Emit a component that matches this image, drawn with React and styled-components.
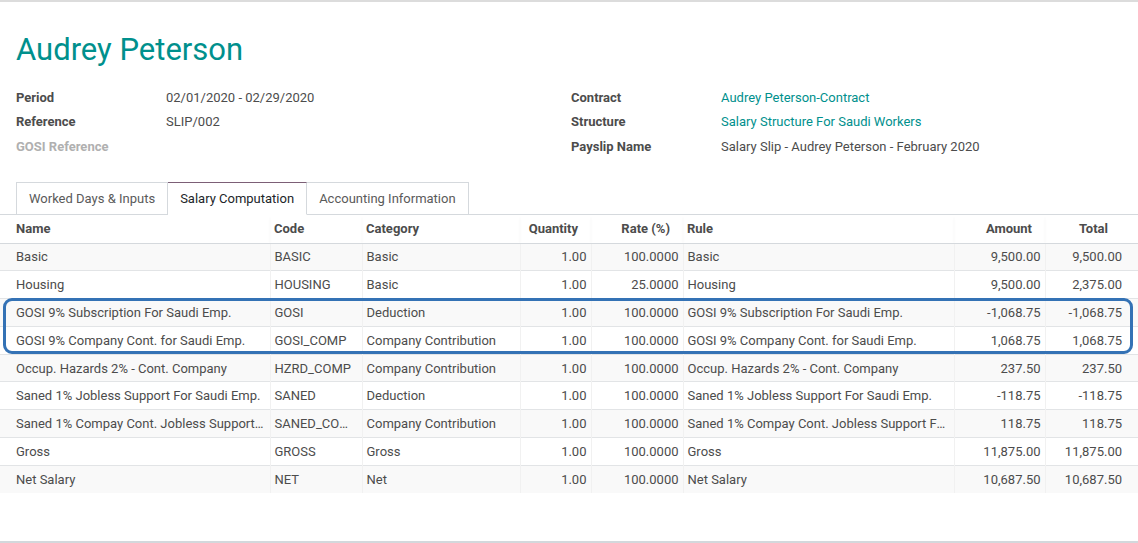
import React from 'react';
import styled, { createGlobalStyle } from 'styled-components';

const GlobalStyle = createGlobalStyle`
  html, body {
    margin: 0;
    padding: 0;
    background: #ffffff;
  }
  body {
    font-family: Roboto, 'Noto Sans', sans-serif;
    font-size: 13px;
    color: #4c4c4c;
  }
`;

const StyledPage = styled.div`
  width: 1138px;
  height: 543px;
  box-sizing: border-box;
  border-top: 2px solid #dcdcdc;
  border-bottom: 2px solid #d3d8dc;
  overflow: hidden;
`;

const StyledSheet = styled.div`
  padding: 29px 16px 0;
`;

const StyledTitle = styled.h1`
  margin: 0;
  font-size: 31px;
  font-weight: 400;
  line-height: 38px;
  color: #00908d;
`;

const StyledGroups = styled.div`
  display: grid;
  grid-template-columns: 555px 1fr;
  margin-top: 16px;
`;

const StyledGroup = styled.div`
  display: grid;
  grid-template-columns: 150px 1fr;
  grid-auto-rows: 24.5px;
  align-items: center;
`;

const StyledLabel = styled.span`
  font-weight: 700;
  color: ${({ muted }) => (muted ? '#b0b0b0' : '#4c4c4c')};
`;

const StyledValue = styled.span`
  color: ${({ link }) => (link ? '#00908d' : '#4c4c4c')};
`;

const StyledTabs = styled.ul`
  display: flex;
  list-style: none;
  margin: 23px 0 0;
  padding: 0 0 0 16px;
  border-bottom: 1px solid #d5d9dd;
`;

const StyledTab = styled.li`
  height: 31px;
  padding: 0 12px;
  display: flex;
  align-items: center;
  margin-bottom: -1px;
  box-sizing: content-box;
  border: 1px solid #d5d9dd;
  border-left-width: ${({ first }) => (first ? '1px' : '0')};
  border-top-color: ${({ active }) => (active ? '#7c5f76' : '#d5d9dd')};
  border-bottom-color: ${({ active }) => (active ? '#ffffff' : '#d5d9dd')};
  background: #ffffff;
  color: ${({ active }) => (active ? '#212529' : '#5a5a5a')};
`;

const StyledTableWrap = styled.div`
  position: relative;
`;

const StyledTable = styled.table`
  width: 1138px;
  border-collapse: collapse;
  table-layout: fixed;
`;

const StyledHeadCell = styled.th`
  height: 28px;
  padding: 0 ${({ right }) => (right ? '13px' : '4px')} 0 4px;
  font-weight: 700;
  color: #4c4c4c;
  text-align: ${({ right }) => (right ? 'right' : 'left')};
  border-bottom: 1px solid #d5d9dd;
  box-shadow: 0 2px 3px -1px rgba(0, 0, 0, 0.08);
  &:first-child {
    padding-left: 16px;
  }
  &:last-child {
    padding-right: 30px;
  }
`;

const StyledRow = styled.tr`
  background: ${({ striped }) => (striped ? '#f9f9f9' : '#ffffff')};
  border-bottom: 1px solid #e2e4e6;
  &:last-child {
    border-bottom: 0;
  }
`;

const StyledCell = styled.td`
  height: 26.8px;
  padding: 0 4px;
  white-space: nowrap;
  overflow: hidden;
  text-overflow: ellipsis;
  text-align: ${({ right }) => (right ? 'right' : 'left')};
  border-left: 1px solid #f1f1f1;
  &:first-child {
    padding-left: 16px;
    border-left: 0;
  }
  &:last-child {
    padding-right: 16px;
  }
`;

const StyledHighlight = styled.div`
  position: absolute;
  left: 3px;
  right: 5px;
  top: ${({ top }) => top}px;
  height: 56px;
  box-sizing: border-box;
  border: 3px solid #3472b5;
  border-radius: 9px;
  pointer-events: none;
`;

const leftFields = [
  { label: 'Period', value: '02/01/2020 - 02/29/2020' },
  { label: 'Reference', value: 'SLIP/002' },
  { label: 'GOSI Reference', value: '', muted: true },
];

const rightFields = [
  { label: 'Contract', value: 'Audrey Peterson-Contract', link: true },
  { label: 'Structure', value: 'Salary Structure For Saudi Workers', link: true },
  { label: 'Payslip Name', value: 'Salary Slip - Audrey Peterson - February 2020' },
];

const columns = [
  { key: 'name', title: 'Name', width: 270 },
  { key: 'code', title: 'Code', width: 92 },
  { key: 'category', title: 'Category', width: 158 },
  { key: 'quantity', title: 'Quantity', width: 71, right: true },
  { key: 'rate', title: 'Rate (%)', width: 92, right: true },
  { key: 'rule', title: 'Rule', width: 271 },
  { key: 'amount', title: 'Amount', width: 91, right: true },
  { key: 'total', title: 'Total', width: 93, right: true },
];

const lines = [
  ['Basic', 'BASIC', 'Basic', '1.00', '100.0000', 'Basic', '9,500.00', '9,500.00'],
  ['Housing', 'HOUSING', 'Basic', '1.00', '25.0000', 'Housing', '9,500.00', '2,375.00'],
  ['GOSI 9% Subscription For Saudi Emp.', 'GOSI', 'Deduction', '1.00', '100.0000', 'GOSI 9% Subscription For Saudi Emp.', '-1,068.75', '-1,068.75'],
  ['GOSI 9% Company Cont. for Saudi Emp.', 'GOSI_COMP', 'Company Contribution', '1.00', '100.0000', 'GOSI 9% Company Cont. for Saudi Emp.', '1,068.75', '1,068.75'],
  ['Occup. Hazards 2% - Cont. Company', 'HZRD_COMP', 'Company Contribution', '1.00', '100.0000', 'Occup. Hazards 2% - Cont. Company', '237.50', '237.50'],
  ['Saned 1% Jobless Support For Saudi Emp.', 'SANED', 'Deduction', '1.00', '100.0000', 'Saned 1% Jobless Support For Saudi Emp.', '-118.75', '-118.75'],
  ['Saned 1% Compay Cont. Jobless Support For Saudi Emp.', 'SANED_COMP', 'Company Contribution', '1.00', '100.0000', 'Saned 1% Compay Cont. Jobless Support For Saudi Emp.', '118.75', '118.75'],
  ['Gross', 'GROSS', 'Gross', '1.00', '100.0000', 'Gross', '11,875.00', '11,875.00'],
  ['Net Salary', 'NET', 'Net', '1.00', '100.0000', 'Net Salary', '10,687.50', '10,687.50'],
];

const tabs = ['Worked Days & Inputs', 'Salary Computation', 'Accounting Information'];

const FieldGroup = ({ fields }) => (
  <StyledGroup>
    {fields.map((field) => (
      <React.Fragment key={field.label}>
        <StyledLabel muted={field.muted}>{field.label}</StyledLabel>
        <StyledValue link={field.link}>{field.value}</StyledValue>
      </React.Fragment>
    ))}
  </StyledGroup>
);

const App = () => (
  <>
    <GlobalStyle />
    <StyledPage>
      <StyledSheet>
        <StyledTitle>Audrey Peterson</StyledTitle>
        <StyledGroups>
          <FieldGroup fields={leftFields} />
          <FieldGroup fields={rightFields} />
        </StyledGroups>
      </StyledSheet>
      <StyledTabs>
        {tabs.map((tab, i) => (
          <StyledTab key={tab} first={i === 0} active={i === 1}>
            {tab}
          </StyledTab>
        ))}
      </StyledTabs>
      <StyledTableWrap>
        <StyledTable>
          <colgroup>
            {columns.map((col) => (
              <col key={col.key} style={{ width: col.width }} />
            ))}
          </colgroup>
          <thead>
            <tr>
              {columns.map((col) => (
                <StyledHeadCell key={col.key} right={col.right}>
                  {col.title}
                </StyledHeadCell>
              ))}
            </tr>
          </thead>
          <tbody>
            {lines.map((line, i) => (
              <StyledRow key={line[1]} striped={i % 2 === 0}>
                {line.map((value, j) => (
                  <StyledCell key={columns[j].key} right={columns[j].right}>
                    {value}
                  </StyledCell>
                ))}
              </StyledRow>
            ))}
          </tbody>
        </StyledTable>
        <StyledHighlight top={83} />
      </StyledTableWrap>
    </StyledPage>
  </>
);

export default App;
